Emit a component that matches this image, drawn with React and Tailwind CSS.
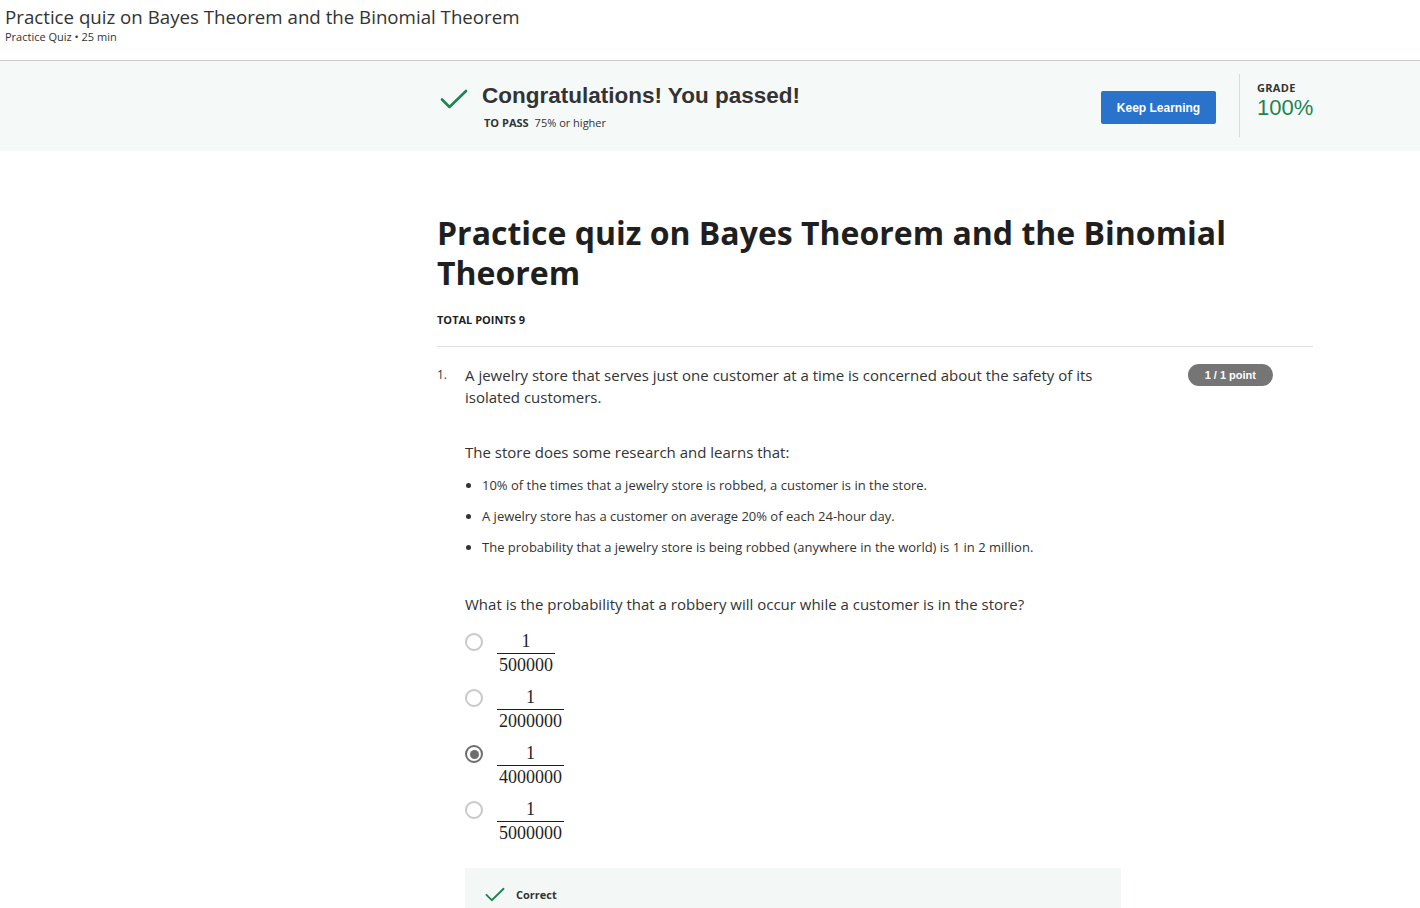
import React from "react";

const OS = { fontFamily: '"Open Sans", sans-serif' };

function Check({ className }) {
  return (
    <svg viewBox="0 0 28 20" className={className} fill="none">
      <path d="M2 10.5 L9.5 18 L26 2" stroke="#1f8354" strokeWidth="2.6" strokeLinecap="round" strokeLinejoin="round" />
    </svg>
  );
}

function Fraction({ den }) {
  return (
    <div className="flex flex-col items-center font-['Liberation_Serif',serif] text-[18px] leading-[20px] text-[#1f1f1f]">
      <div className="px-[2px] pb-[2px]">1</div>
      <div className="border-t border-[#1f1f1f] px-[2px] pt-[1px]">{den}</div>
    </div>
  );
}

function Radio({ checked }) {
  return (
    <div className={`w-[18px] h-[18px] rounded-full border-2 flex items-center justify-center ${checked ? "border-[#6e6e6e]" : "border-[#c8c8c8]"}`}>
      {checked && <div className="w-[9px] h-[9px] rounded-full bg-[#6e6e6e]" />}
    </div>
  );
}

export default function App() {
  const options = ["500000", "2000000", "4000000", "5000000"];
  return (
    <div className="w-[1420px] h-[908px] overflow-hidden bg-white text-[#1f1f1f]" style={OS}>
      <header className="h-[61px] border-b border-[#c9c9c9] pl-[5px] pt-[5px]">
        <div className="text-[18.7px] leading-[24px] text-[#333]">Practice quiz on Bayes Theorem and the Binomial Theorem</div>
        <div className="text-[11px] leading-[14px] text-[#333] mt-[1px]">Practice Quiz • 25 min</div>
      </header>

      <div className="h-[90px] bg-[#f5f9f8] flex">
        <div className="w-[437px]" />
        <div className="w-[876px] flex items-start">
          <Check className="w-[28px] h-[20px] mt-[28px] ml-[3px]" />
          <div className="ml-[14px] mt-[21px]">
            <div className="font-['Liberation_Sans',Arial,sans-serif] font-bold text-[22.5px] leading-[28px] text-[#333]">Congratulations! You passed!</div>
            <div className="mt-[6px] ml-[2px] text-[11px] leading-[14px] text-[#333]">
              <span className="font-bold">TO PASS</span>
              <span className="ml-[6px]">75% or higher</span>
            </div>
          </div>
          <div className="flex-1" />
          <div className="mt-[30px] w-[115px] h-[33px] bg-[#2a73cc] rounded-[2px] flex items-center justify-center text-white font-['Liberation_Sans',Arial,sans-serif] font-bold text-[12px]">
            Keep Learning
          </div>
          <div className="ml-[23px] mt-[13px] w-px h-[63px] bg-[#dcdcdc]" />
          <div className="ml-[17px] mt-[20px] w-[56px]">
            <div className="text-[11px] leading-[14px] font-bold text-[#333] tracking-[0.3px]">GRADE</div>
            <div className="font-['Liberation_Sans',Arial,sans-serif] text-[22px] leading-[26px] text-[#1f8354]">100%</div>
          </div>
        </div>
      </div>

      <main className="pl-[437px] pt-[62px]">
        <div className="w-[876px]">
          <h1 className="text-[32px] leading-[40px] font-bold text-[#1f1f1f]">Practice quiz on Bayes Theorem and the Binomial Theorem</h1>
          <div className="mt-[20px] text-[11px] leading-[14px] font-bold text-[#1f1f1f]">TOTAL POINTS 9</div>
          <div className="mt-[19px] h-px bg-[#e1e1e1]" />

          <div className="flex mt-[17px]">
            <div className="w-[28px] text-[12px] leading-[22px] text-[#333]">1.</div>
            <div className="w-[656px] text-[15px] leading-[22px] text-[#333]">
              <p>A jewelry store that serves just one customer at a time is concerned about the safety of its isolated customers.</p>
              <p className="mt-[33px]">The store does some research and learns that:</p>
              <ul className="mt-[13px] text-[13px] leading-[18px] space-y-[13px]">
                <li className="flex items-center"><span className="w-[5px] h-[5px] rounded-full bg-[#333] ml-[1px] mr-[11px]" />10% of the times that a jewelry store is robbed, a customer is in the store.</li>
                <li className="flex items-center"><span className="w-[5px] h-[5px] rounded-full bg-[#333] ml-[1px] mr-[11px]" />A jewelry store has a customer on average 20% of each 24-hour day.</li>
                <li className="flex items-center"><span className="w-[5px] h-[5px] rounded-full bg-[#333] ml-[1px] mr-[11px]" />The probability that a jewelry store is being robbed (anywhere in the world) is 1 in 2 million.</li>
              </ul>
              <p className="mt-[37px]">What is the probability that a robbery will occur while a customer is in the store?</p>
              <div className="mt-[16px] flex flex-col gap-[12px]">
                {options.map((d, i) => (
                  <div key={d} className="flex items-start">
                    <div className="mt-[2px]"><Radio checked={i === 2} /></div>
                    <div className="ml-[14px]"><Fraction den={d} /></div>
                  </div>
                ))}
              </div>
              <div className="mt-[25px] h-[60px] bg-[#f3f8f6] flex items-start pt-[19px] pl-[20px]">
                <Check className="w-[20px] h-[15px]" />
                <span className="ml-[11px] text-[11px] leading-[15px] font-bold text-[#333]">Correct</span>
              </div>
            </div>
            <div className="flex-1" />
            <div className="mt-[0px] mr-[40px] h-[22px] px-[17px] rounded-full bg-[#757575] text-white font-['Liberation_Sans',Arial,sans-serif] font-bold text-[11px] flex items-center">1 / 1 point</div>
          </div>
        </div>
      </main>
    </div>
  );
}
